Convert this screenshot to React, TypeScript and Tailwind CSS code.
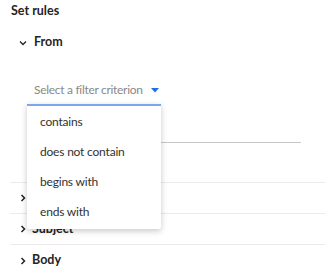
import React from "react";

const font = { fontFamily: 'Lato, "Noto Sans", sans-serif' };

function ChevronDown() {
  return (
    <svg width="8" height="6" viewBox="0 0 8 6" className="shrink-0">
      <path d="M1 1.5 L4 4.5 L7 1.5" fill="none" stroke="#252423" strokeWidth="1.3" />
    </svg>
  );
}
function ChevronRight() {
  return (
    <svg width="6" height="8" viewBox="0 0 6 8" className="shrink-0">
      <path d="M1.5 1 L4.5 4 L1.5 7" fill="none" stroke="#252423" strokeWidth="1.5" />
    </svg>
  );
}

export default function App() {
  return (
    <div className="relative w-[335px] h-[279px] bg-white overflow-hidden text-[#252423]" style={font}>
      <div className="pl-[11px] pt-[2px] text-[12.5px] font-bold leading-[17px]">Set rules</div>
      <div className="flex items-center gap-[7px] pl-[19px] mt-[15px] h-[17px] text-[12.5px] font-bold">
        <ChevronDown />
        <span>From</span>
      </div>
      <div className="flex items-center pl-[34px] mt-[31px] h-[16px]">
        <span className="text-[12px] tracking-[-0.3px] text-[#8a8886]">Select a filter criterion</span>
        <svg width="8" height="5" viewBox="0 0 8 5" className="ml-[8px]">
          <path d="M0 0 H8 L4 4.5 Z" fill="#1f6fe5" />
        </svg>
      </div>
      <div className="ml-[34px] mr-[34px] mt-[44px] h-px bg-[#c8c6c4]" />
      <div className="mx-[10px] mt-[39px]">
        <div className="h-px bg-[#edebe9]" />
        <div className="flex items-center gap-[6px] pl-[10px] h-[30px] text-[12.5px] font-bold">
          <ChevronRight />
          <span>To</span>
        </div>
        <div className="h-px bg-[#edebe9]" />
        <div className="flex items-center gap-[6px] pl-[10px] h-[30px] text-[12.5px] font-bold">
          <ChevronRight />
          <span>Subject</span>
        </div>
        <div className="h-px bg-[#edebe9]" />
        <div className="flex items-center gap-[6px] pl-[10px] h-[31px] text-[12.5px] font-bold">
          <ChevronRight />
          <span>Body</span>
        </div>
      </div>

      <div className="absolute left-[27px] top-[104px] w-[134px] h-[125px] bg-white border-t-2 border-[#7aa7f0] shadow-[0_2px_6px_rgba(0,0,0,0.22)] rounded-b-[2px] pt-[1px]">
        {["contains", "does not contain", "begins with", "ends with"].map((t) => (
          <div key={t} className="h-[30px] flex items-center pl-[13px] text-[12px] tracking-[-0.2px] text-[#323130]">
            {t}
          </div>
        ))}
      </div>
    </div>
  );
}
